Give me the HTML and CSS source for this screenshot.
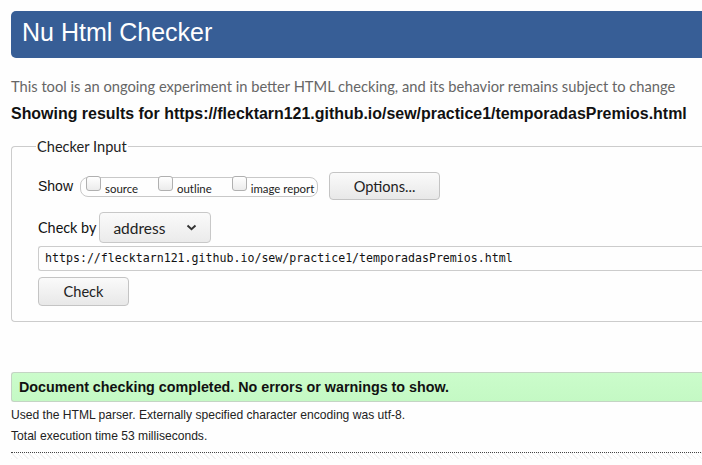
FILE: index.html
```html
<!DOCTYPE html>
<html lang="en">
<head>
<meta charset="utf-8">
<title>Nu Html Checker</title>
<link rel="stylesheet" href="styles.css">
</head>
<body>
<div class="page">
  <h1 class="banner">Nu Html Checker</h1>
  <p class="tagline">This tool is an ongoing experiment in better HTML checking, and its behavior remains subject to change</p>
  <p class="results-for">Showing results for https://flecktarn121.github.io/sew/practice1/temporadasPremios.html</p>
  <fieldset class="checker">
    <legend class="legend">Checker Input</legend>
    <div class="row show-row">
      <span class="lbl">Show</span>
      <span class="pill">
        <label class="opt"><span class="box"></span><span class="opt-text">source</span></label>
        <label class="opt"><span class="box"></span><span class="opt-text">outline</span></label>
        <label class="opt"><span class="box"></span><span class="opt-text">image report</span></label>
      </span>
      <button class="btn btn-options" type="button">Options...</button>
    </div>
    <div class="row by-row">
      <span class="lbl lbl-hum">Check by</span>
      <span class="select">address<svg class="chev" width="11" height="7" viewBox="0 0 11 7"><path d="M1.5 1.5 L5.5 5.3 L9.5 1.5" fill="none" stroke="#333" stroke-width="1.9"/></svg></span>
    </div>
    <div class="url">https://flecktarn121.github.io/sew/practice1/temporadasPremios.html</div>
    <button class="btn btn-check" type="button">Check</button>
  </fieldset>
  <p class="success">Document checking completed. No errors or warnings to show.</p>
  <p class="details">Used the HTML parser. Externally specified character encoding was utf-8.</p>
  <p class="details">Total execution time 53 milliseconds.</p>
  <div class="rule"></div>
</div>
</body>
</html>
```
FILE: styles.css
```css
html, body {
  margin: 0;
  padding: 0;
  overflow: hidden;
  background: #fefefe;
}
.page {
  width: 760px;
  padding: 11px 0 0 11px;
  font-family: "Liberation Sans", Arial, sans-serif;
  color: #111;
}
.banner {
  margin: 0;
  height: 47px;
  box-sizing: border-box;
  padding: 6px 0 0 11px;
  background: #375e96;
  color: #fff;
  font-size: 25px;
  font-weight: normal;
  line-height: 30px;
  border-radius: 5px 0 0 5px;
}
.tagline {
  margin: 19px 0 0 0;
  font-family: Lato, sans-serif;
  font-size: 14.7px;
  line-height: 18px;
  color: #666;
}
.results-for {
  margin: 9px 0 0 0;
  font-size: 15.95px;
  font-weight: bold;
  line-height: 20px;
  color: #111;
}
.checker {
  margin: 14px 0 0 0;
  padding: 0 0 15px 26px;
  border: 1px solid #ccc;
  border-right: none;
  border-radius: 4px 0 0 4px;
}
.legend {
  font-family: Lato, sans-serif;
  font-size: 14.6px;
  line-height: 17px;
  padding: 0 1px;
  margin-left: -2px;
  color: #222;
}
.row {
  display: flex;
  align-items: center;
}
.show-row {
  margin-top: 17px;
  height: 28px;
}
.lbl {
  font-size: 14px;
  color: #111;
  margin-right: 7px;
}
.lbl-hum {
  font-family: Lato, sans-serif;
  font-size: 14.4px;
  margin-right: 3px;
}
.pill {
  display: flex;
  align-items: flex-start;
  flex: none;
  height: 20px;
  width: 238px;
  box-sizing: border-box;
  border: 1px solid #c8c8c8;
  border-radius: 8px;
  padding: 0 0 0 5px;
  margin-top: 1px;
}
.opt {
  display: flex;
  align-items: flex-start;
  margin-right: 20px;
}
.opt:last-child { margin-right: 0; }
.box {
  flex: none;
  width: 15px;
  height: 15px;
  box-sizing: border-box;
  border: 1px solid #b0b0b0;
  border-radius: 3px;
  background: linear-gradient(#fff, #ebebeb);
  margin-top: -2px;
}
.opt-text {
  font-family: Lato, sans-serif;
  font-size: 11.4px;
  color: #222;
  margin: 4px 0 0 4px;
  line-height: 13px;
}
.btn {
  font-family: Lato, sans-serif;
  font-size: 14.6px;
  color: #222;
  border: 1px solid #c4c4c4;
  border-radius: 4px;
  background: linear-gradient(#fafafa, #e8e8e8);
  padding: 0;
  box-sizing: border-box;
  flex: none;
}
.btn-options {
  width: 111px;
  height: 28px;
  margin-left: 11px;
}
.by-row {
  margin-top: 12px;
}
.select {
  display: flex;
  align-items: center;
  justify-content: space-between;
  flex: none;
  width: 112px;
  height: 31px;
  box-sizing: border-box;
  padding: 0 13px 0 13px;
  border: 1px solid #c8c8c8;
  border-radius: 4px;
  background: linear-gradient(#fafafa, #ebebeb);
  font-family: Lato, sans-serif;
  font-size: 15.5px;
  color: #222;
}
.url {
  margin-top: 3px;
  height: 25px;
  box-sizing: border-box;
  border: 1px solid #ccc;
  border-right: none;
  border-radius: 3px 0 0 3px;
  padding: 0 0 0 6px;
  font-family: "DejaVu Sans Mono", monospace;
  font-size: 11.6px;
  line-height: 23px;
  color: #111;
}
.btn-check {
  display: block;
  margin-top: 6px;
  width: 91px;
  height: 29px;
}
.success {
  margin: 50px 0 0 0;
  height: 30px;
  box-sizing: border-box;
  border-top: 1px solid #c4d4c4;
  border-bottom: 1px solid #c4d4c4;
  border-left: 1px solid #c4d4c4;
  border-radius: 3px 0 0 3px;
  background: linear-gradient(#cbfccb, #c4f9c4);
  padding: 0 0 0 7px;
  font-size: 14.3px;
  font-weight: bold;
  line-height: 28px;
  color: #111;
}
.details {
  margin: 6px 0 0 0;
  font-size: 12.1px;
  line-height: 15px;
  color: #222;
}
.details + .details {
  margin-top: 6px;
}
.rule {
  margin-top: 8px;
  height: 6px;
  border-top: 1px dotted #444;
  background: repeating-linear-gradient(45deg, #f2f2f2 0 1px, transparent 1px 4px);
}
```
